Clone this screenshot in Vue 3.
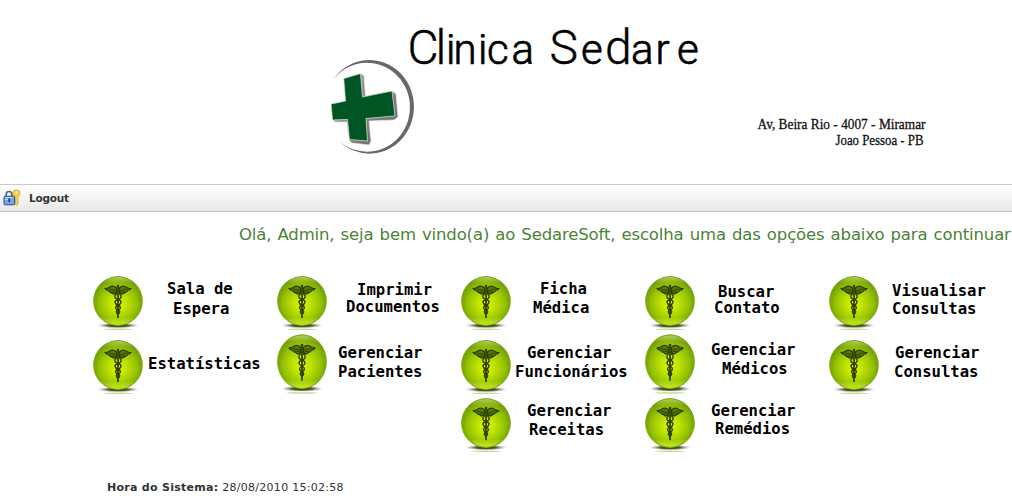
<script setup>
// Each caption line: text, left inset from the button, gap above the line.
const rows = [
  [
    { lines: [['Sala de', 20, 8], ['Espera', 26, 4]] },
    { lines: [['Imprimir', 26, 9], ['Documentos', 15, 1]] },
    { lines: [['Ficha', 25, 8], ['Médica', 18, 3]] },
    { lines: [['Buscar', 19, 11], ['Contato', 15, 0]] },
    { lines: [['Visualisar', 9, 10], ['Consultas', 9, 2]] },
  ],
  [
    { lines: [['Estatísticas', 1, 20]] },
    { tall: true, lines: [['Gerenciar', 7, 8], ['Pacientes', 7, 3]] },
    { lines: [['Gerenciar', 12, 9], ['Funcionários', 0, 3]] },
    { tall: true, lines: [['Gerenciar', 12, 5], ['Médicos', 23, 3]] },
    { lines: [['Gerenciar', 12, 9], ['Consultas', 11, 3]] },
  ],
  [
    null,
    null,
    { lines: [['Gerenciar', 12, 9], ['Receitas', 14, 3]] },
    { lines: [['Gerenciar', 12, 9], ['Remédios', 16, 2]] },
    null,
  ],
]

// Runs of the clinic name with the pen position of each letter.
const name = [
  ['Cl', '407.5 435.5'],
  ['inica', '446 453.5 478 487 511.500', true],
  ['S', '549.5'],
  ['e', '581', true],
  ['d', '605'],
  ['are', '631 655.5 677', true],
]
</script>

<template>
  <div class="page">
    <svg width="0" height="0" class="defs" aria-hidden="true">
      <defs>
        <radialGradient id="ball" cx=".5" cy=".56" r=".55">
          <stop offset="0" stop-color="#dcf900" />
          <stop offset=".35" stop-color="#bce000" />
          <stop offset=".7" stop-color="#90bf00" />
          <stop offset="1" stop-color="#628d00" />
        </radialGradient>
        <linearGradient id="gloss" x1="0" y1="0" x2="0" y2="1">
          <stop offset="0" stop-color="#f2ffb0" stop-opacity=".6" />
          <stop offset=".14" stop-color="#d8ef70" stop-opacity=".08" />
          <stop offset=".84" stop-color="#d4f060" stop-opacity="0" />
          <stop offset="1" stop-color="#e4ff20" stop-opacity=".8" />
        </linearGradient>
        <radialGradient id="shade">
          <stop offset="0" stop-color="#141a00" />
          <stop offset=".5" stop-color="#323a10" stop-opacity=".8" />
          <stop offset="1" stop-color="#889966" stop-opacity="0" />
        </radialGradient>
        <linearGradient id="side" x1="0" y1="0" x2="1" y2="1">
          <stop offset="0" stop-color="#aaa" />
          <stop offset="1" stop-color="#606460" />
        </linearGradient>
        <symbol id="caduceus" viewBox="0 0 54 58" preserveAspectRatio="none">
          <ellipse cx="27" cy="50.500" rx="21" ry="2.800" fill="url(#shade)" />
          <ellipse cx="27" cy="54.300" rx="15" ry=".7" fill="#a8bc50" opacity=".6" />
          <circle cx="27" cy="26" r="24.700" fill="url(#ball)" />
          <circle cx="27" cy="26" r="24.200" fill="url(#gloss)" stroke="#85ad16" stroke-width=".8" />
          <g fill="none" stroke="#2b3d00" stroke-width="1.200" stroke-linecap="round" stroke-linejoin="round">
            <path d="M27 11V42.500" stroke-width="1.700" />
            <path d="M25.500 13C23 10.500 20.500 11 18.500 12.200C17 13.200 15.500 13.600 14 13.600C15.200 15.200 16.500 15.500 17.500 15.500C18.200 17.200 19.600 17.700 20.600 17.600C21.500 19.300 24 19.300 25.500 18Z" fill="#5b7a06" />
            <path d="M28.500 13C31 10.500 33.500 11 35.500 12.200C37 13.200 38.500 13.600 40 13.600C38.800 15.200 37.500 15.500 36.500 15.500C35.800 17.200 34.400 17.700 33.400 17.600C32.500 19.300 30 19.300 28.500 18Z" fill="#5b7a06" />
            <path d="M18 14L25 15.500M20.500 16.500L25 17.200M36 14L29 15.500M33.500 16.500L29 17.200" stroke-width=".8" />
            <path d="M25.500 19C22.500 21 23.500 23.500 27 24.500C31.500 26 30.500 29 27 30C23.500 31.500 24 34 27 35C29.500 36 29 38 27 39" stroke-width="1.400" />
            <path d="M28.500 19C31.500 21 30.500 23.500 27 24.500C22.500 26 23.500 29 27 30C30.500 31.500 30 34 27 35C24.500 36 25 38 27 39" stroke-width="1.400" />
          </g>
          <circle cx="27" cy="11" r="1.300" fill="#2b3d00" />
        </symbol>
      </defs>
    </svg>

    <header class="banner">
      <svg width="1012" height="184" viewBox="0 0 1012 184">
        <path d="M333 80A44.500 46.800 0 1 1 339 141A43 44.500 0 1 0 333 80Z" fill="#68686a" />
        <g stroke="#e4e8e4" stroke-width=".7" stroke-linejoin="round">
          <path d="M360.500 73.500L364 75.500L365.500 96L392 91L396 94L398 117L394 120L369 121L371 141L369 145L352 143L349 140L347 122L335 122L332.500 120L348 119L361 97Z" fill="url(#side)" />
          <path d="M343.700 78.500L360.500 73.500L362.500 97L392 91L395 116L366 118.500L367.500 141L349.500 139.500L347.500 119.500L332.500 120L331 104L345.500 101Z" fill="#005522" />
        </g>
        <text class="title" y="64"><tspan v-for="(g, i) in name" :key="i" :x="g[1]" :class="{ short: g[2] }">{{ g[0] }}</tspan></text>
        <text class="address" x="757.500" y="128.500" textLength="168" lengthAdjust="spacingAndGlyphs">Av, Beira Rio - 4007 - Miramar</text>
        <text class="address" x="835.500" y="144.500" textLength="88" lengthAdjust="spacingAndGlyphs">Joao Pessoa - PB</text>
      </svg>
    </header>

    <nav class="bar">
      <svg width="18" height="18" viewBox="0 0 18 18">
        <path d="M9.500 4.500C9.500 1.500 12 1 13.500 1C16 1 17 2.500 17 4.500C17 6 16 7 15 7.500V15L13.500 16.500L12 15V7.500C10.500 7 9.500 6 9.500 4.500Z" fill="#f4cf45" stroke="#d5a52a" stroke-width=".8" />
        <circle cx="13.500" cy="3.400" r="1" fill="#fff8d0" />
        <path d="M3.200 8V5.500C3.200 1.500 8.800 1.500 8.800 5.500V8" fill="none" stroke="#4c6480" stroke-width="1.600" />
        <rect x="1" y="7.200" width="10.600" height="8.600" rx="1" fill="#79a5df" stroke="#294f8f" />
        <path d="M2 8.500H10M2 10.500H5" stroke="#c4dcf8" />
        <path d="M6.200 9.500V13" stroke="#173f7c" stroke-width="1.600" />
      </svg>
      <a class="logout">Logout</a>
    </nav>

    <p class="welcome">Olá, Admin, seja bem vindo(a) ao SedareSoft, escolha uma das opções abaixo para continuar</p>

    <main class="menu">
      <div v-for="(row, r) in rows" :key="r" class="row">
        <div v-for="(item, c) in row" :key="c" class="cell">
          <a v-if="item" class="tile" :class="{ tall: item.tall }">
            <svg class="icon"><use href="#caduceus" /></svg>
            <span class="caption">
              <span
                v-for="line in item.lines"
                :key="line[0]"
                class="line"
                :style="{ marginLeft: line[1] + 'px', marginTop: line[2] + 'px' }"
              >{{ line[0] }}</span>
            </span>
          </a>
        </div>
      </div>
    </main>

    <footer class="clock"><b>Hora do Sistema:</b> 28/08/2010 15:02:58</footer>
  </div>
</template>

<style>
body { margin: 0; background: #fff; overflow: hidden; }
</style>

<style scoped>
.page {
  width: 1012px;
  height: 502px;
  overflow: hidden;
  background: #fff;
  font-family: "DejaVu Sans", Verdana, sans-serif;
  color: #333;
}
.defs { display: block; }
.banner { height: 184px; }
.banner svg { display: block; }
.title { font: 300 48px Roboto, sans-serif; fill: #000; stroke: #000; stroke-width: .4px; }
.short { font-size: 42px; stroke-width: .7px; }
.address { font: 15px "Liberation Serif", serif; fill: #111; stroke: #111; stroke-width: .3px; }
.bar {
  box-sizing: border-box;
  height: 28px;
  display: flex;
  align-items: center;
  gap: 8px;
  padding-left: 3px;
  border-top: 1px solid #c8c8c8;
  border-bottom: 1px solid #c0c0c0;
  background: linear-gradient(#fff, #e8e8e8);
}
.logout { font-size: 10.500px; font-weight: bold; letter-spacing: -.2px; color: #333; }
.welcome {
  margin: 0;
  padding: 13px 0 0 239px;
  height: 50px;
  line-height: 20px;
  font-size: 16.500px;
  letter-spacing: -.14px;
  word-spacing: 1px;
  color: #4b8236;
  white-space: nowrap;
}
.menu { padding-left: 91px; }
.row { display: grid; grid-template-columns: repeat(5, 184px); height: 59px; }
.row:nth-child(2) { height: 63px; }
.row:nth-child(2) .cell { padding-top: 5px; }
.tile { display: flex; }
.icon { width: 54px; height: 58px; flex: none; }
.caption { display: block; margin: -2px 0 0 2px; white-space: nowrap; }
.row:nth-child(2) .caption { margin-top: -3px; }
.row:nth-child(3) .caption { margin-top: -3px; }
.line {
  display: block;
  font: bold 15.600px/16px "DejaVu Sans Mono", monospace;
  color: #000;
}
.tile.tall { margin-top: -6px; }
.row:nth-child(2) .tall .caption { margin-top: 3.500px; }
.tall .icon { height: 64px; }
.clock { margin-top: 25px; padding-left: 107px; font-size: 11px; line-height: 14px; letter-spacing: .28px; }
</style>
